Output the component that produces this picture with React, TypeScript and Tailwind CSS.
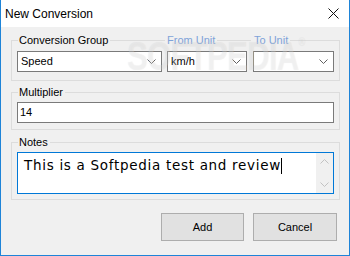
import React from 'react';

const ui = "font-['Liberation_Sans',Arial,sans-serif] text-[11px] text-black";

function Chevron({ up, color = '#606060' }: { up?: boolean; color?: string }) {
  return (
    <svg width="9" height="5" viewBox="0 0 9 5" className="block">
      <polyline
        points={up ? '0.5,4.5 4.5,0.5 8.5,4.5' : '0.5,0.5 4.5,4.5 8.5,0.5'}
        fill="none"
        stroke={color}
        strokeWidth="1"
      />
    </svg>
  );
}

function Combo({ value, width }: { value?: string; width: string }) {
  return (
    <div className={`${width} h-[21px] bg-white border border-[#7a7a7a] flex items-center justify-between pl-[3px] pr-[5px]`}>
      <span className="leading-none">{value}</span>
      <Chevron />
    </div>
  );
}

// simple group box, label sits on the top border
function GroupBox({ title, children, className = '' }: { title: string; children: React.ReactNode; className?: string }) {
  return (
    <div className={`ml-[10px] mr-[9px] ${className}`}>
      <div className="flex h-4">
        <div className="mt-2 w-[7px] border-l border-t border-[#dcdcdc]" />
        <span className="pl-[1px] pr-[2px] leading-4">{title}</span>
        <div className="mt-2 flex-1 border-t border-r border-[#dcdcdc]" />
      </div>
      <div className="border-x border-b border-[#dcdcdc] px-[5px]">{children}</div>
    </div>
  );
}

export default function App() {
  return (
    <div className={`relative w-[350px] h-[256px] overflow-hidden bg-[#f0f0f0] border-x border-b border-[#1e84d8] flex flex-col ${ui}`}>
      {/* title bar */}
      <div className="h-[27px] bg-white flex items-center justify-between pl-[4px] pr-[10px]">
        <span className="text-[12px] leading-none">New Conversion</span>
        <svg width="11" height="11" viewBox="0 0 11 11">
          <path d="M0.5 0.5 L10.5 10.5 M10.5 0.5 L0.5 10.5" stroke="#111" strokeWidth="1" />
        </svg>
      </div>

      {/* conversion group */}
      <div className="ml-[10px] mr-[9px] mt-[5px]">
        <div className="flex h-4">
          <div className="w-[154px] flex">
            <div className="mt-2 w-[7px] border-l border-t border-[#dcdcdc]" />
            <span className="pl-[1px] pr-[2px] leading-4">Conversion Group</span>
            <div className="mt-2 flex-1 border-t border-[#dcdcdc]" />
          </div>
          <div className="w-[86px] flex">
            <span className="pl-[2px] pr-[2px] leading-4 text-[#7fa3d9]">From Unit</span>
            <div className="mt-2 flex-1 border-t border-[#dcdcdc]" />
          </div>
          <div className="flex-1 flex">
            <span className="pl-[3px] pr-[2px] leading-4 text-[#7fa3d9]">To Unit</span>
            <div className="mt-2 flex-1 border-t border-r border-[#dcdcdc]" />
          </div>
        </div>
        <div className="border-x border-b border-[#dcdcdc] pl-[5px] pt-[3px] pb-[8px] flex">
          <Combo value="Speed" width="w-[145px]" />
          <div className="ml-[5px]">
            <Combo value="km/h" width="w-[80px]" />
          </div>
          <div className="ml-[6px]">
            <Combo width="w-[81px]" />
          </div>
        </div>
      </div>

      <GroupBox title="Multiplier" className="mt-[3px]">
        <div className="pt-[2px] pb-[6px]">
          <div className="h-[21px] bg-white border border-[#7a7a7a] flex items-center pl-[2px]">14</div>
        </div>
      </GroupBox>

      <GroupBox title="Notes" className="mt-[4px]">
        <div className="pt-[2px] pb-[5px]">
          <div className="h-[42px] bg-white border border-[#0078d7] flex">
            <div className="flex-1 pl-[6px] pt-[4px] font-['DejaVu_Sans',sans-serif] text-[13.5px] tracking-[0.7px] leading-[17px] flex items-start">
              <span>This is a Softpedia test and review</span>
              <span className="inline-block w-px h-[16px] bg-black mt-[1px]" />
            </div>
            <div className="w-[17px] bg-[#f0f0f0] flex flex-col items-center justify-between py-[6px]">
              <Chevron up color="#c2c2c2" />
              <Chevron color="#c2c2c2" />
            </div>
          </div>
        </div>
      </GroupBox>

      {/* buttons */}
      <div className="mt-[13px] flex justify-end gap-[9px] pr-[12px]">
        <button className="w-[83px] h-[28px] bg-[#e1e1e1] border border-[#adadad]">Add</button>
        <button className="w-[84px] h-[28px] bg-[#e1e1e1] border border-[#adadad]">Cancel</button>
      </div>

      {/* softpedia watermark */}
      <div className="pointer-events-none absolute left-[126px] top-[36px] text-[40px] font-bold leading-none tracking-[-1px] text-white/25 [text-shadow:0_0_1px_rgba(0,0,0,0.08)] scale-x-[0.78] origin-left">
        SOFTPEDIA<span className="text-[12px] align-top">®</span>
      </div>
    </div>
  );
}
